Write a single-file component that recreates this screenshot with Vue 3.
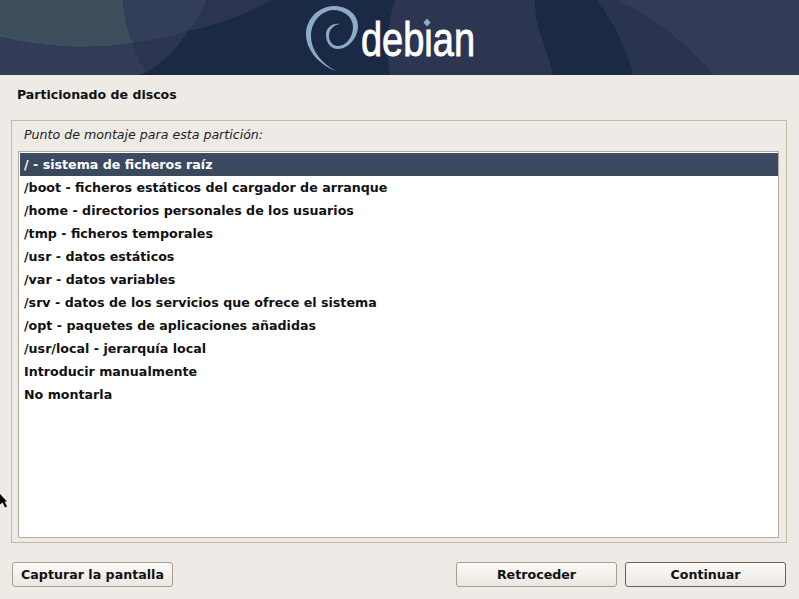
<script setup>
const rows = [
  '/ - sistema de ficheros raíz',
  '/boot - ficheros estáticos del cargador de arranque',
  '/home - directorios personales de los usuarios',
  '/tmp - ficheros temporales',
  '/usr - datos estáticos',
  '/var - datos variables',
  '/srv - datos de los servicios que ofrece el sistema',
  '/opt - paquetes de aplicaciones añadidas',
  '/usr/local - jerarquía local',
  'Introducir manualmente',
  'No montarla'
]
</script>

<template>
  <div class="screen">
    <header class="banner">
      <svg class="banner-art" width="799" height="75" viewBox="0 0 799 75">
        <rect width="799" height="75" fill="#1a2a45" />
        <path d="M0 0H123C124 15 127 30 133 43C115 46 96 47 77 47C50 46 24 43 0 37Z" fill="#3d4e5d" />
        <path d="M123 0H207C203 12 197 22 188 31C172 37 153 41 133 43C127 30 124 15 123 0Z" fill="#333e58" />
        <path d="M207 0H272C246 14 218 25 188 31C197 22 203 12 207 0Z" fill="#2b3550" />
        <path d="M0 37C24 43 50 46 77 47C96 47 115 46 133 43C136 54 141 64 147 72L138 75H0Z" fill="#323c58" />
        <path d="M133 43C153 41 172 37 188 31C178 47 164 62 147 72C141 64 136 54 133 43Z" fill="#2c3651" />
        <path d="M395 0C388 22 385 48 390 75H553C549 58 544 45 540 33C536 22 535 10 535 0Z" fill="#2c3651" />
        <path d="M597 0H617C655 18 688 45 713 75H633C626 46 613 22 597 0Z" fill="#2a3450" />
        <path d="M617 0H799V75H713C688 45 655 18 617 0Z" fill="#323c58" />
        <path d="M336 71C322 66 306 52 306 34C306 20 318 6 334 6C348 6 358 15 358 26C358 38 348 49 338 49C331 49 326 43 326 35C326 28 332 23 340 24C333 25 329 30 329 36C329 42 333 46 338 46C346 46 353 37 353 27C353 17 344 10 333 10C320 11 311 23 311 36C311 50 322 64 336 71Z" fill="#8dabc9" />
        <text class="wordmark" x="361" y="56" textLength="114" lengthAdjust="spacingAndGlyphs">debian</text>
        <rect x="421" y="17" width="13" height="12" fill="#2c3651" />
        <path d="M427 18.5L430.5 22.5L427 26.5L423.5 22.5Z" fill="#8fb0c9" />
      </svg>
    </header>

    <main class="content">
      <h1 class="title">Particionado de discos</h1>
      <section class="frame">
        <p class="prompt">Punto de montaje para esta partición:</p>
        <ul class="list">
          <li v-for="(row, i) in rows" :key="row" class="row" :class="{ selected: i === 0 }">{{ row }}</li>
        </ul>
      </section>
    </main>

    <footer class="actions">
      <button class="btn">Capturar la pantalla</button>
      <div class="nav">
        <button class="btn">Retroceder</button>
        <button class="btn primary">Continuar</button>
      </div>
    </footer>

    <svg class="cursor" width="9" height="16" viewBox="0 0 9 16">
      <path d="M0 0L7 7.5H4.6L7 12.5L5 13.5L2.6 8.6L0 10.5Z" fill="#000" />
    </svg>
  </div>
</template>

<style>
html, body { margin: 0; background: #eeebe6; }
</style>

<style scoped>
.screen {
  position: relative;
  width: 799px;
  height: 599px;
  overflow: hidden;
  background: #eeebe6;
  font-family: "DejaVu Sans", sans-serif;
  font-size: 12.65px;
  color: #111;
}
.banner { height: 75px; }
.banner-art { display: block; }
.wordmark {
  font-family: "Liberation Sans", sans-serif;
  font-size: 48px;
  fill: #fff;
  stroke: #fff;
  stroke-width: 0.9px;
}
.content {
  padding: 0 12px 0 11px;
}
.title {
  margin: 0;
  padding: 12px 6px 0;
  height: 33px;
  font-size: 12.55px;
  line-height: 15px;
  font-weight: bold;
}
.frame {
  box-sizing: border-box;
  height: 423px;
  border: 1px solid #c3b8a8;
  padding: 6px 7px 4px 6px;
  display: flex;
  flex-direction: column;
}
.prompt {
  margin: 0;
  padding-left: 6px;
  height: 24px;
  line-height: 15px;
  font-style: italic;
  font-size: 12.6px;
  color: #222;
}
.list {
  flex: 1;
  margin: 0;
  padding: 1px 0 0 1px;
  list-style: none;
  background: #fff;
  border: 1px solid #b5aa9b;
}
.row {
  height: 23px;
  line-height: 23px;
  padding-left: 4px;
  font-weight: bold;
}
.row.selected {
  color: #fff;
  background: linear-gradient(#3c4a66, #39495a);
}
.actions {
  display: flex;
  justify-content: space-between;
  padding: 19px 13px 0 12px;
}
.nav { display: flex; gap: 8px; }
.btn {
  box-sizing: border-box;
  width: 161px;
  height: 25px;
  padding: 0;
  border: 1px solid #a99d8c;
  border-radius: 3px;
  background: linear-gradient(#fbfaf8, #ebe7e2);
  font-family: "DejaVu Sans", sans-serif;
  font-size: 12.65px;
  font-weight: bold;
  color: #111;
}
.btn.primary { border-color: #6b6257; }
.cursor {
  position: absolute;
  left: 0;
  top: 494px;
}
</style>
